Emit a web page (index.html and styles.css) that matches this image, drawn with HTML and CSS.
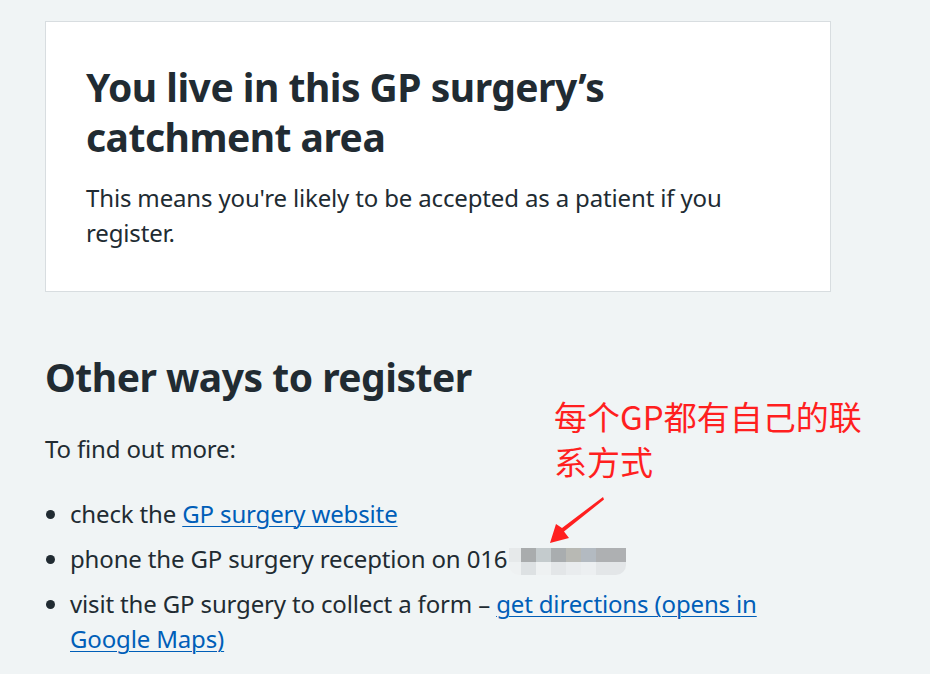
FILE: index.html
```html
<!DOCTYPE html>
<html lang="en">
<head>
<meta charset="utf-8">
<title>GP surgery catchment area</title>
<link rel="stylesheet" href="styles.css">
</head>
<body>
<main class="page">
  <section class="card">
    <h2 class="card-heading">You live in this GP surgery’s catchment area</h2>
    <p class="card-text">This means you're likely to be accepted as a patient if you register.</p>
  </section>

  <section class="section">
    <h2 class="section-heading">Other ways to register</h2>
    <p class="body-text">To find out more:</p>
    <ul class="list">
      <li>check the <a href="#" class="link">GP surgery website</a></li>
      <li>phone the GP surgery reception on 016<span class="blur-digit">1</span><span class="mosaic"><span class="row top"><i class="c0"></i><i class="c1"></i><i class="c2"></i><i class="c3"></i><i class="c4"></i><i class="c5"></i><i class="c6"></i></span><span class="row bottom"><i class="c0"></i><i class="c1"></i><i class="c2"></i><i class="c3"></i><i class="c4"></i><i class="c5"></i><i class="c6"></i></span></span></li>
      <li>visit the GP surgery to collect a form – <a href="#" class="link">get directions (opens in Google Maps)</a></li>
    </ul>
  </section>

  <div class="annotation">每个GP都有自己的联系方式</div>
  <svg class="arrow" width="70" height="60" viewBox="0 0 70 60" aria-hidden="true">
    <polygon points="63,7 64,9.5 24,41.5 29,48 10,53 16,34 22,38" fill="#ff1f1f"/>
  </svg>
</main>
</body>
</html>
```

FILE: styles.css
```css
html, body {
  margin: 0;
  padding: 0;
}

body {
  background: #f0f4f5;
  color: #212b32;
  font-family: "Noto Sans", "Open Sans", sans-serif;
  font-size: 24px;
  line-height: 35px;
  letter-spacing: -0.15px;
  width: 930px;
  height: 674px;
  overflow: hidden;
}

.page {
  position: relative;
  padding: 21px 0 0 45px;
  width: 786px;
}

.card {
  background: #ffffff;
  border: 1px solid #d8dde0;
  padding: 40px 40px 41px 40px;
}

.card-heading,
.section-heading {
  font-size: 39px;
  line-height: 50px;
  font-weight: 700;
  margin: 0;
  letter-spacing: -0.5px;
}

.card-text {
  margin: 18px 0 0 0;
}

.section {
  padding-top: 60px;
}

.body-text {
  margin: 29px 0 0 0;
}

.list {
  margin: 30px 0 0 0;
  padding-left: 25px;
  list-style: disc;
}

.list li {
  margin-bottom: 10px;
}

.link {
  color: #005eb8;
  text-decoration: underline;
  text-underline-offset: 3px;
  text-decoration-thickness: 1.3px;
}

.blur-digit {
  color: #c9cfd2;
}

.mosaic {
  display: inline-block;
  vertical-align: -7px;
  border-radius: 0 0 10px 10px;
  overflow: hidden;
  margin-left: -12px;
  line-height: 0;
}

.row {
  display: flex;
}

.row i {
  display: block;
  width: 15px;
}

.row.top i { height: 14px; }
.row.bottom i { height: 13px; }

.row i.c0 { width: 12px; }
.row i.c6 { width: 30px; }

.top .c0 { background: #e6e9ea; }
.top .c1 { background: #a9acad; }
.top .c2 { background: #c4cbcd; }
.top .c3 { background: #a9adaf; }
.top .c4 { background: #b8b9b4; }
.top .c5 { background: #b3bac1; }
.top .c6 { background: #aeb0b2; }

.bottom .c0 { background: #eef1f2; }
.bottom .c1 { background: #dde1e3; }
.bottom .c2 { background: #eef1f2; }
.bottom .c3 { background: #e3e6e8; }
.bottom .c4 { background: #e9ecee; }
.bottom .c5 { background: #eceff1; }
.bottom .c6 { background: #e3e6e8; }

.annotation {
  position: absolute;
  left: 554px;
  top: 394px;
  width: 320px;
  font-family: "Noto Sans CJK SC", "Noto Sans", sans-serif;
  font-size: 33px;
  line-height: 45px;
  letter-spacing: 0;
  color: #ff1f1f;
}

.arrow {
  position: absolute;
  left: 540px;
  top: 490px;
}
```
